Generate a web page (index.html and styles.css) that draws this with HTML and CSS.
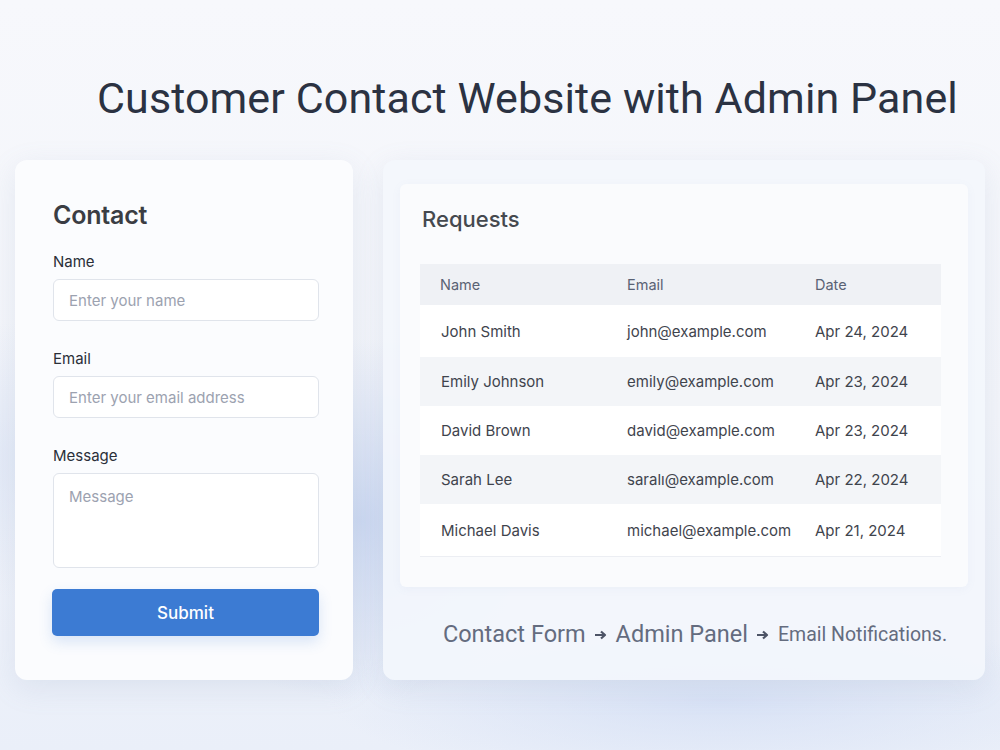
FILE: index.html
```html
<!DOCTYPE html>
<html>
  <head>
    <title>Customer Contact Website with Admin Panel</title>
    <link rel="stylesheet" href="styles.css">
  </head>
  <body>
    <h1 class="page-title">Customer Contact Website with Admin Panel</h1>

    <main class="layout">
      <form class="contact-card" action="">
        <h2 class="contact-card__title">Contact</h2>
        <label class="field">
          <span class="field__label">Name</span>
          <input class="field__input" type="text" placeholder="Enter your name">
        </label>
        <label class="field">
          <span class="field__label">Email</span>
          <input class="field__input" type="text" placeholder="Enter your email address">
        </label>
        <label class="field field--last">
          <span class="field__label">Message</span>
          <textarea class="field__input field__input--area" placeholder="Message"></textarea>
        </label>
        <button class="submit" type="submit">Submit</button>
      </form>

      <section class="admin-card">
        <div class="requests">
          <h2 class="requests__title">Requests</h2>
          <table class="requests__table">
            <thead>
              <tr><th>Name</th><th>Email</th><th>Date</th></tr>
            </thead>
            <tbody>
              <tr><td>John Smith</td><td>john@example.com</td><td>Apr 24, 2024</td></tr>
              <tr><td>Emily Johnson</td><td>emily@example.com</td><td>Apr 23, 2024</td></tr>
              <tr><td>David Brown</td><td>david@example.com</td><td>Apr 23, 2024</td></tr>
              <tr><td>Sarah Lee</td><td>saralı@example.com</td><td>Apr 22, 2024</td></tr>
              <tr><td>Michael Davis</td><td>michael@example.com</td><td>Apr 21, 2024</td></tr>
            </tbody>
          </table>
        </div>
        <p class="flow">
          <span>Contact Form</span>
          <svg class="flow__arrow" viewBox="0 0 14 10" width="14" height="10"><path d="M1 5h9M7 1.5 11 5 7 8.5" fill="none" stroke="currentColor" stroke-width="2.2" stroke-linejoin="round"/></svg>
          <span>Admin Panel</span>
          <svg class="flow__arrow" viewBox="0 0 14 10" width="14" height="10"><path d="M1 5h9M7 1.5 11 5 7 8.5" fill="none" stroke="currentColor" stroke-width="2.2" stroke-linejoin="round"/></svg>
          <span class="flow__small">Email Notifications.</span>
        </p>
      </section>
    </main>
  </body>
</html>
```

FILE: styles.css
```css
body {
  margin: 0;
  height: 750px;
  overflow: hidden;
  font-family: Inter, "Noto Sans", sans-serif;
  background:
    radial-gradient(ellipse 300px 260px at 360px 520px, rgba(190, 206, 238, 0.7), rgba(190, 206, 238, 0) 70%),
    radial-gradient(ellipse 560px 120px at 720px 700px, rgba(208, 220, 244, 0.7), rgba(208, 220, 244, 0) 70%),
    radial-gradient(ellipse 400px 200px at 60px 460px, rgba(214, 224, 244, 0.6), rgba(214, 224, 244, 0) 70%),
    linear-gradient(180deg, #f7f8fc 0%, #f3f5fa 55%, #eaeff9 100%);
}

.page-title {
  margin: 0;
  padding: 74px 0 0 97px;
  height: 160px;
  box-sizing: border-box;
  font-family: Roboto, "Liberation Sans", sans-serif;
  font-weight: 400;
  font-size: 43px;
  line-height: 48px;
  color: #2b3242;
  letter-spacing: 0.1px;
}

.layout {
  display: flex;
  gap: 30px;
  padding-left: 15px;
}

/* contact form */
.contact-card {
  width: 338px;
  height: 520px;
  box-sizing: border-box;
  padding: 39px 34px 0 38px;
  background: #fbfcfe;
  border-radius: 12px;
  box-shadow: 0 8px 30px rgba(120, 140, 180, 0.14);
  display: flex;
  flex-direction: column;
}
.contact-card__title {
  margin: 0 0 21px;
  font-size: 25px;
  line-height: 32px;
  font-weight: 600;
  color: #3a3d43;
  letter-spacing: -0.2px;
}

.field {
  display: flex;
  flex-direction: column;
  margin-bottom: 28px;
}
.field--last { margin-bottom: 21px; }
.field__label {
  font-size: 15px;
  line-height: 20px;
  color: #2a2f38;
  margin-bottom: 7px;
}
.field__input {
  height: 42px;
  box-sizing: border-box;
  border: 1px solid #e0e4eb;
  border-radius: 6px;
  background: #fff;
  padding: 0 15px;
  font-family: inherit;
  font-size: 15px;
  color: #2a2f38;
  outline: none;
}
.field__input::placeholder { color: #9ca2b0; }
.field__input--area {
  height: 95px;
  padding-top: 13px;
  resize: none;
}

.submit {
  height: 47px;
  margin-left: -1px;
  border: none;
  border-radius: 5px;
  background: #3c7bd3;
  color: #fff;
  font-family: inherit;
  font-size: 17px;
  font-weight: 500;
  box-shadow: 0 6px 14px rgba(60, 123, 211, 0.18);
}

/* admin panel */
.admin-card {
  width: 602px;
  height: 520px;
  box-sizing: border-box;
  padding: 24px 17px 0;
  background: rgba(243, 246, 252, 0.92);
  border-radius: 12px;
  box-shadow: 0 8px 30px rgba(120, 140, 180, 0.14);
  display: flex;
  flex-direction: column;
}
.requests {
  height: 403px;
  box-sizing: border-box;
  padding: 21px 27px 0 20px;
  background: #fafbfd;
  border-radius: 6px;
  box-shadow: 0 2px 10px rgba(120, 140, 180, 0.06);
}
.requests__title {
  margin: 0 0 31px 2px;
  font-size: 22px;
  line-height: 28px;
  font-weight: 500;
  color: #45494f;
}

.requests__table {
  width: 521px;
  border-collapse: collapse;
  font-size: 15px;
}
.requests__table th {
  height: 41px;
  padding: 0 0 0 20px;
  text-align: left;
  font-weight: 400;
  font-size: 14.5px;
  color: #5a6274;
  background: #eff1f5;
}
.requests__table th:nth-child(1) { width: 167px; }
.requests__table th:nth-child(2) { width: 168px; }
.requests__table td {
  height: 49px;
  padding: 0 0 0 20px;
  color: #3f444d;
  background: #fff;
}
.requests__table td:first-child { padding-left: 21px; }
.requests__table tbody tr:nth-child(even) td { background: #f3f5f8; }
.requests__table tbody tr:first-child td { height: 52px; }
.requests__table tbody tr:last-child td { height: 52px; border-bottom: 1px solid #eceef3; }

.flow {
  flex: 1;
  margin: 0;
  display: flex;
  align-items: center;
  justify-content: center;
  padding-left: 22px;
  font-family: Roboto, "Liberation Sans", sans-serif;
  font-size: 23.5px;
  color: #646c7f;
  gap: 8px;
}
.flow__arrow {
  color: #4d5466;
  margin-top: 2px;
}
.flow__small {
  font-size: 19.5px;
  margin-top: 2px;
}
```
